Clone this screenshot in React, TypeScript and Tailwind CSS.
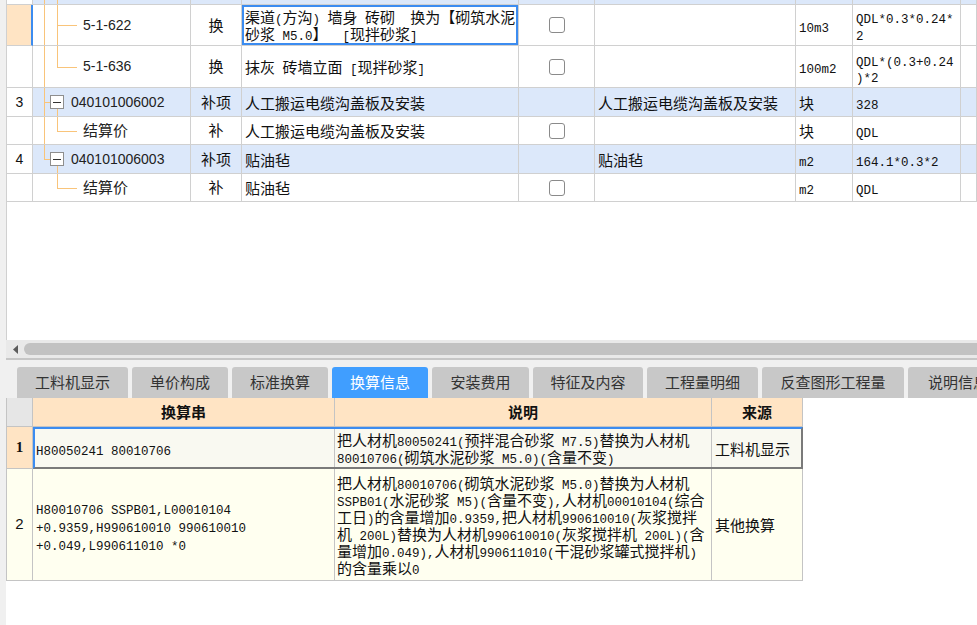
import React from "react";

const SPLIT_RE = /[\x00-\x7F]+|[^\x00-\x7F]+/g;

function Mix({ text }: { text: string }) {
  const parts = text.match(SPLIT_RE) ?? [];
  return (
    <>
      {parts.map((p, i) =>
        /^[\x00-\x7F]/.test(p) ? (
          <span key={i} className="font-['Liberation_Mono',monospace] text-[12.5px]">
            {p}
          </span>
        ) : (
          <span key={i} className="font-['Noto_Sans_CJK_SC',sans-serif] text-[15px]">
            {p}
          </span>
        )
      )}
    </>
  );
}

function TextLines({ lines, lh }: { lines: string[]; lh: string }) {
  return (
    <div className="whitespace-pre">
      {lines.map((l, i) => (
        <div key={i} className={lh}>
          <Mix text={l} />
        </div>
      ))}
    </div>
  );
}

const G = "grid grid-cols-[26px_158px_51px_277px_76px_201px_57px_108px_16px]";
const B = "border-r border-b border-[#d0d0d0]";

const AFull = () => <span className="absolute bg-[#f9c47a] left-[11px] top-0 bottom-0 w-px" />;
const AHalf = () => <span className="absolute bg-[#f9c47a] left-[11px] top-0 h-1/2 w-px" />;
const Stub = () => <span className="absolute bg-[#f9c47a] left-[11px] top-1/2 w-[6px] h-px" />;
const BFull = () => <span className="absolute bg-[#f9c47a] left-[24px] top-0 bottom-0 w-px" />;
const BHalf = () => <span className="absolute bg-[#f9c47a] left-[24px] top-0 h-1/2 w-px" />;
const BFromBox = () => <span className="absolute bg-[#f9c47a] left-[24px] top-[21px] bottom-0 w-px" />;
const Leaf = () => <span className="absolute bg-[#f9c47a] left-[24px] top-1/2 w-[20px] h-px" />;
const Box = () => (
  <span className="absolute left-[17px] top-[7px] w-[14px] h-[14px] border border-[#8e8e8e] bg-white flex items-center justify-center">
    <span className="w-[8px] h-px bg-[#333]" />
  </span>
);

function Check() {
  return <div className="w-[16px] h-[16px] rounded-[3px] border border-[#8a8a8a] bg-white" />;
}

type RowProps = {
  h: string;
  blue?: boolean;
  sel?: boolean;
  num?: string;
  tree: React.ReactNode;
  code?: React.ReactNode;
  type?: string;
  name?: React.ReactNode;
  check?: boolean;
  feature?: React.ReactNode;
  unit?: React.ReactNode;
  expr?: React.ReactNode;
};

function TopRow(p: RowProps) {
  const bg = p.blue ? "bg-[#dce8fa]" : "bg-white";
  return (
    <div className={`${G} ${p.h}`}>
      <div
        className={
          p.sel
            ? "border-b border-b-[#d0d0d0] border-r-2 border-r-[#3c8cf0] bg-[#ffe4c4]"
            : `${B} bg-white flex items-center justify-center font-['Liberation_Sans',sans-serif] text-[14px]`
        }
      >
        {p.num}
      </div>
      <div className={`${B} ${bg} relative flex items-center`}>
        {p.tree}
        {p.code}
      </div>
      <div className={`${B} ${bg} flex items-center justify-center`}>
        {p.type ? <Mix text={p.type} /> : null}
      </div>
      <div
        className={
          p.sel
            ? `border-r border-b border-[#d0d0d0] shadow-[inset_0_0_0_2px_#3c8cf0] ${bg} flex items-center pl-[3px]`
            : `${B} ${bg} flex items-center pl-[3px]`
        }
      >
        {p.name}
      </div>
      <div className={`${B} ${bg} flex items-center justify-center`}>{p.check ? <Check /> : null}</div>
      <div className={`${B} ${bg} flex items-center pl-[3px]`}>{p.feature}</div>
      <div className={`${B} ${bg} flex items-center pl-[3px]`}>{p.unit}</div>
      <div className={`${B} ${bg} flex items-center pl-[3px]`}>{p.expr}</div>
      <div className={`${B} ${bg}`} />
    </div>
  );
}

const one = (s: string) => <TextLines lines={[s]} lh="h-[17px] leading-[17px]" />;

function LeafText({ t }: { t: string }) {
  return <span className="relative pl-[50px] font-['Liberation_Sans',sans-serif] text-[14px] text-[#222]">{t}</span>;
}
function CjkLeaf({ t }: { t: string }) {
  return <span className="relative pl-[50px] font-['Noto_Sans_CJK_SC',sans-serif] text-[15px] text-[#222]">{t}</span>;
}
function CodeText({ t }: { t: string }) {
  return <span className="relative pl-[38px] font-['Liberation_Sans',sans-serif] text-[14px] text-[#222]">{t}</span>;
}

function TopTable() {
  return (
    <div className="h-[340px] bg-white border-l border-[#d0d0d0] overflow-hidden">
      <TopRow
        h="h-[5px]"
        blue
        tree={
          <>
            <AFull />
            <BFull />
          </>
        }
      />
      <TopRow
        h="h-[41px]"
        sel
        tree={
          <>
            <AFull />
            <BFull />
            <Leaf />
          </>
        }
        code={<LeafText t="5-1-622" />}
        type="换"
        name={
          <TextLines
            lines={["渠道(方沟) 墙身 砖砌  换为【砌筑水泥", "砂浆 M5.0】  [现拌砂浆]"]}
            lh="h-[17px] leading-[17px]"
          />
        }
        check
        unit={one("10m3")}
        expr={<TextLines lines={["QDL*0.3*0.24*", "2"]} lh="h-[17px] leading-[17px]" />}
      />
      <TopRow
        h="h-[42px]"
        tree={
          <>
            <AFull />
            <BHalf />
            <Leaf />
          </>
        }
        code={<LeafText t="5-1-636" />}
        type="换"
        name={one("抹灰 砖墙立面 [现拌砂浆]")}
        check
        unit={one("100m2")}
        expr={<TextLines lines={["QDL*(0.3+0.24", ")*2"]} lh="h-[16px] leading-[16px]" />}
      />
      <TopRow
        h="h-[29px]"
        blue
        num="3"
        tree={
          <>
            <AFull />
            <Stub />
            <Box />
            <BFromBox />
          </>
        }
        code={<CodeText t="040101006002" />}
        type="补项"
        name={one("人工搬运电缆沟盖板及安装")}
        feature={one("人工搬运电缆沟盖板及安装")}
        unit={one("块")}
        expr={one("328")}
      />
      <TopRow
        h="h-[28px]"
        tree={
          <>
            <AFull />
            <BHalf />
            <Leaf />
          </>
        }
        code={<CjkLeaf t="结算价" />}
        type="补"
        name={one("人工搬运电缆沟盖板及安装")}
        check
        unit={one("块")}
        expr={one("QDL")}
      />
      <TopRow
        h="h-[29px]"
        blue
        num="4"
        tree={
          <>
            <AHalf />
            <Stub />
            <Box />
            <BFromBox />
          </>
        }
        code={<CodeText t="040101006003" />}
        type="补项"
        name={one("贴油毡")}
        feature={one("贴油毡")}
        unit={one("m2")}
        expr={one("164.1*0.3*2")}
      />
      <TopRow
        h="h-[28px]"
        tree={
          <>
            <BHalf />
            <Leaf />
          </>
        }
        code={<CjkLeaf t="结算价" />}
        type="补"
        name={one("贴油毡")}
        check
        unit={one("m2")}
        expr={one("QDL")}
      />
    </div>
  );
}

function Scrollbar() {
  return (
    <div className="h-[20px] bg-[#e9e9e9] border-b-2 border-[#c6c6c6] flex items-center pl-[7px]">
      <svg width="5" height="9" viewBox="0 0 5 9" className="shrink-0">
        <polygon points="5,0 0,4.5 5,9" fill="#5c5c5c" />
      </svg>
      <div className="ml-[6px] flex-1 h-[12px] rounded-l-full bg-[#c2c2c2]" />
    </div>
  );
}

const TABS: { label: string; w: string; active?: boolean }[] = [
  { label: "工料机显示", w: "w-[111px]" },
  { label: "单价构成", w: "w-[96px]" },
  { label: "标准换算", w: "w-[96px]" },
  { label: "换算信息", w: "w-[96px]", active: true },
  { label: "安装费用", w: "w-[97px]" },
  { label: "特征及内容", w: "w-[110px]" },
  { label: "工程量明细", w: "w-[111px]" },
  { label: "反查图形工程量", w: "w-[142px]" },
  { label: "说明信息", w: "w-[100px]" },
];

function Tabs() {
  return (
    <div className="h-[38px] bg-[#f0f0f0] flex items-end gap-[4px] pl-[11px] overflow-hidden">
      {TABS.map((t) => (
        <div
          key={t.label}
          className={`${t.w} shrink-0 h-[31px] rounded-t-[3px] flex items-center justify-center font-['Noto_Sans_CJK_SC',sans-serif] text-[15px] ${
            t.active ? "bg-[#409eff] text-white" : "bg-[#c8c8c8] text-[#333]"
          }`}
        >
          {t.label}
        </div>
      ))}
    </div>
  );
}

const BB = "border-r border-b border-[#c4c4c4]";

function BottomTable() {
  return (
    <div className="w-[797px] border-l border-[#c4c4c4]">
      <div className="flex h-[29px]">
        <div className={`w-[26px] ${BB} bg-[#e6e6e6]`} />
        <div className={`w-[302px] ${BB} bg-[#ffe4c4] flex items-center justify-center font-bold text-[15px]`}>换算串</div>
        <div className={`w-[377px] ${BB} bg-[#ffe4c4] flex items-center justify-center font-bold text-[15px]`}>说明</div>
        <div className={`w-[91px] ${BB} bg-[#ffe4c4] flex items-center justify-center font-bold text-[15px]`}>来源</div>
      </div>
      <div className="flex h-[42px]">
        <div className={`w-[26px] ${BB} bg-[#ffe4c4] flex items-center justify-center font-['Liberation_Serif',serif] font-bold text-[15px]`}>
          1
        </div>
        <div className="flex w-[770px] border-t-2 border-l-2 border-t-[#3c8cf0] border-l-[#3c8cf0] border-r-2 border-b-2 border-r-[#7a7a7a] border-b-[#7a7a7a] bg-[#f9f9f1]">
          <div className="w-[300px] border-r border-[#c4c4c4] flex items-center pl-[1px]">
            <TextLines lines={["H80050241 80010706"]} lh="h-[17px] leading-[17px]" />
          </div>
          <div className="w-[377px] border-r border-[#c4c4c4] flex items-center pl-[2px]">
            <TextLines
              lines={["把人材机80050241(预拌混合砂浆 M7.5)替换为人材机", "80010706(砌筑水泥砂浆 M5.0)(含量不变)"]}
              lh="h-[17px] leading-[17px]"
            />
          </div>
          <div className="flex-1 flex items-center pl-[3px]">
            <TextLines lines={["工料机显示"]} lh="h-[17px] leading-[17px]" />
          </div>
        </div>
      </div>
      <div className="flex h-[112px] bg-[#fffff0]">
        <div className={`w-[26px] ${BB} flex items-center justify-center font-['Liberation_Sans',sans-serif] text-[15px]`}>2</div>
        <div className={`w-[302px] ${BB} flex items-center pl-[3px]`}>
          <TextLines
            lines={["H80010706 SSPB01,L00010104", "+0.9359,H990610010 990610010", "+0.049,L990611010 *0"]}
            lh="h-[18px] leading-[18px]"
          />
        </div>
        <div className={`w-[377px] ${BB} flex items-center pl-[2px]`}>
          <TextLines
            lines={[
              "把人材机80010706(砌筑水泥砂浆 M5.0)替换为人材机",
              "SSPB01(水泥砂浆 M5)(含量不变),人材机00010104(综合",
              "工日)的含量增加0.9359,把人材机990610010(灰浆搅拌",
              "机 200L)替换为人材机990610010(灰浆搅拌机 200L)(含",
              "量增加0.049),人材机990611010(干混砂浆罐式搅拌机)",
              "的含量乘以0",
            ]}
            lh="h-[17px] leading-[17px]"
          />
        </div>
        <div className={`w-[91px] ${BB} flex items-center pl-[3px]`}>
          <TextLines lines={["其他换算"]} lh="h-[17px] leading-[17px]" />
        </div>
      </div>
    </div>
  );
}

export default function App() {
  return (
    <div className="w-[977px] h-[625px] flex bg-white overflow-hidden font-['Noto_Sans_CJK_SC','Liberation_Sans',sans-serif] text-[#111]">
      <div className="w-[6px] shrink-0 bg-[#f0f0f0]" />
      <div className="flex-1 min-w-0 flex flex-col">
        <TopTable />
        <Scrollbar />
        <Tabs />
        <BottomTable />
      </div>
    </div>
  );
}
